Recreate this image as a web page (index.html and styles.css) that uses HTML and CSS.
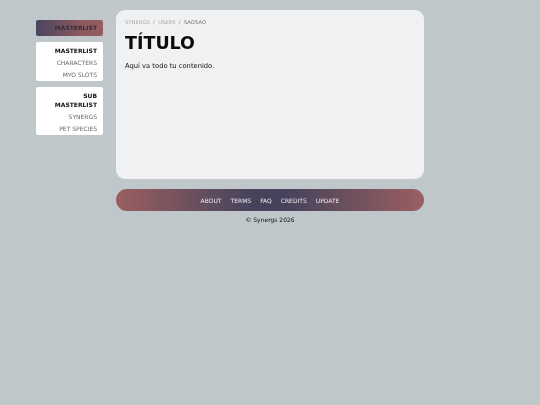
FILE: index.html
```html
<!DOCTYPE html>
<html lang="es">
<head>
<meta charset="utf-8">
<title>Synergs</title>
<link rel="stylesheet" href="styles.css">
</head>
<body>
<div class="page">
  <aside class="sidebar">
    <div class="side-title">MASTERLIST</div>
    <nav class="card">
      <div class="card-head">MASTERLIST</div>
      <a class="card-link">CHARACTERS</a>
      <a class="card-link">MYO SLOTS</a>
    </nav>
    <nav class="card">
      <div class="card-head">SUB MASTERLIST</div>
      <a class="card-link">SYNERGS</a>
      <a class="card-link">PET SPECIES</a>
    </nav>
  </aside>
  <div class="column">
    <main class="content">
      <div class="crumbs"><span>SYNERGS</span><i>/</i><span>USERS</span><i>/</i><b>SAOSAO</b></div>
      <h1>TÍTULO</h1>
      <p>Aquí va todo tu contenido.</p>
    </main>
    <footer class="footer">
      <a>ABOUT</a><a>TERMS</a><a>FAQ</a><a>CREDITS</a><a>UPDATE</a>
    </footer>
    <div class="copy">© Synergs 2026</div>
  </div>
</div>
</body>
</html>
```
FILE: styles.css
```css
html, body { margin: 0; height: 100%; }
body {
  background: #bfc7ca;
  font-family: "DejaVu Sans", Verdana, sans-serif;
  color: #111;
}
.page {
  display: flex;
  align-items: flex-start;
  gap: 13px;
  padding: 10px 0 0 36px;
  filter: blur(0.3px);
}
.sidebar {
  width: 67px;
  padding-top: 10px;
  display: flex;
  flex-direction: column;
  gap: 6px;
}
.side-title {
  height: 15.75px;
  line-height: 16px;
  border-radius: 2px;
  background: linear-gradient(90deg, #4a4560, #8e5a5e 70%, #965c5e);
  color: #332c38;
  font-size: 6px;
  font-weight: 700;
  text-align: right;
  padding-right: 6px;
}
.card {
  background: #fff;
  border-radius: 2px;
  padding: 2px 6px 0;
  text-align: right;
  display: flex;
  flex-direction: column;
}
.card-head {
  font-size: 6px;
  font-weight: 700;
  line-height: 9px;
  padding: 2px 0;
  color: #111;
}
.card-link {
  font-size: 6px;
  line-height: 12px;
  color: #666;
}
.column { width: 308px; }
.content {
  height: 169px;
  box-sizing: border-box;
  background: #eff1f3;
  border-radius: 9px;
  padding: 9px 9px 0;
}
.crumbs {
  font-size: 5.25px;
  line-height: 7px;
  color: #aaa;
  display: flex;
  gap: 3.25px;
}
.crumbs i { font-style: normal; color: #888; }
.crumbs b { font-weight: 400; color: #777; }
h1 {
  margin: 7px 0 0;
  font-size: 17.5px;
  line-height: 21px;
  font-weight: 700;
  color: #0b0b0b;
}
p {
  margin: 7px 0 0;
  font-size: 6.75px;
  line-height: 10px;
  color: #111;
}
.footer {
  margin-top: 10px;
  height: 22px;
  border-radius: 11px;
  background: linear-gradient(90deg, #9b5f60, #45435c 45%, #45435c 55%, #9b5f60);
  display: flex;
  justify-content: center;
  align-items: center;
  gap: 9px;
  font-size: 6px;
  color: #f0ebee;
}
.copy {
  margin-top: 4px;
  text-align: center;
  font-size: 6px;
  line-height: 9px;
  color: #111;
}
```
